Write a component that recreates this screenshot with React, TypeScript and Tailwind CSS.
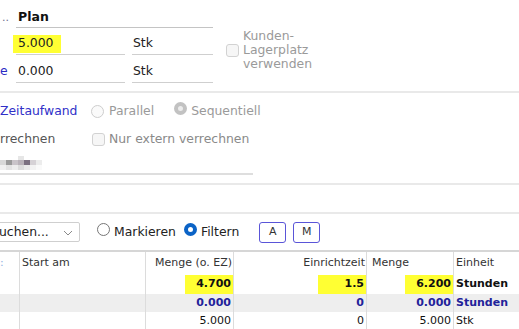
import React from "react";

function Radio({ checked = false, disabled = false }: { checked?: boolean; disabled?: boolean }) {
  if (checked && disabled) {
    return <span className="inline-block h-[13px] w-[13px] shrink-0 rounded-full border-[4px] border-[#c2c2c2] bg-[#ececec]" />;
  }
  if (checked) {
    return <span className="inline-block h-[13px] w-[13px] shrink-0 rounded-full border-[4px] border-[#0b63c6] bg-white" />;
  }
  return (
    <span
      className={`inline-block h-[13px] w-[13px] shrink-0 rounded-full border ${
        disabled ? "border-[#cdcdcd] bg-[#fafafa]" : "border-[#767676] bg-white"
      }`}
    />
  );
}

function Checkbox() {
  return <span className="inline-block h-[13px] w-[13px] shrink-0 rounded-[3px] border border-[#d2d2d2] bg-[#f6f6f6]" />;
}

const blur = [
  ["#d8d8d8", "#9a9a9a", "#c9c4c9", "#b9b2b9", "#7b7080", "#d6d2d6", "#ececec"],
  ["#f0f0f0", "#e3e3e3", "#ededed", "#dcdcdc", "#e9e9e9", "#f3f3f3", "#fafafa"],
];

const rows = [
  { a: "4.700", b: "1.5", c: "6.200", u: "Stunden", kind: "hl" },
  { a: "0.000", b: "0", c: "0.000", u: "Stunden", kind: "blue" },
  { a: "5.000", b: "0", c: "5.000", u: "Stk", kind: "plain" },
];

export default function App() {
  return (
    <div className="relative h-[329px] w-[519px] overflow-hidden bg-white font-['DejaVu_Sans',Verdana,sans-serif] text-[12.4px] text-[#222]">
      {/* Plan block */}
      <div className="flex h-[93px] border-b-2 border-[#e9e9e9] pt-[7px]">
        <div className="flex flex-col">
          <div className="flex h-[21px] items-center">
            <span className="w-[16px] pl-[2px] text-[11px] leading-none text-[#6f6f8f]">..</span>
            <div className="flex h-full w-[197px] items-center border-b border-[#c4c4c4] pl-[2px] text-[12.5px] font-bold text-[#111]">
              Plan
            </div>
          </div>
          <div className="mt-[5px] flex h-[22px] items-stretch">
            <span className="w-[16px]" />
            <div className="flex w-[109px] items-center border-b border-[#cfcfcf]">
              <span className="-ml-[3px] flex h-[18px] w-[48px] items-center bg-[#ffff33] pl-[5px]">5.000</span>
            </div>
            <div className="ml-[7px] flex w-[81px] items-center border-b border-[#cfcfcf] pl-[1px]">Stk</div>
          </div>
          <div className="mt-[6px] flex h-[22px] items-stretch">
            <span className="flex w-[16px] items-start pt-[1px] text-[#2b2bc4]">e</span>
            <div className="flex w-[109px] items-center border-b border-[#cfcfcf] pl-[2px]">0.000</div>
            <div className="ml-[7px] flex w-[81px] items-center border-b border-[#cfcfcf] pl-[1px]">Stk</div>
          </div>
        </div>
        <div className="ml-[13px] mt-[21px] flex h-[44px] items-center gap-[4px]">
          <Checkbox />
          <div className="leading-[14px] text-[#9a9a9a]">
            Kunden-
            <br />
            Lagerplatz
            <br />
            verwenden
          </div>
        </div>
      </div>

      {/* Zeitaufwand block */}
      <div className="h-[92px] border-b-2 border-[#e9e9e9] pt-[7px]">
        <div className="flex h-[22px] items-center">
          <span className="w-[91px] text-[#3030c8]">Zeitaufwand</span>
          <Radio disabled />
          <span className="ml-[5px] text-[#9a9a9a]">Parallel</span>
          <span className="ml-[20px]">
            <Radio checked disabled />
          </span>
          <span className="ml-[4px] text-[#9a9a9a]">Sequentiell</span>
        </div>
        <div className="mt-[6px] flex h-[22px] items-center">
          <span className="w-[92px] text-[#555]">rrechnen</span>
          <Checkbox />
          <span className="ml-[4px] text-[#8a8a8a]">Nur extern verrechnen</span>
        </div>
        <div className="mt-[6px] w-[253px] border-b-2 border-[#dedede] pb-[3px]">
          <div className="flex flex-col">
            <div className="ml-[18px] h-[4px] w-[6px] bg-[#e6e6e6]" />
            {blur.map((r, i) => (
              <div key={i} className="flex">
                {r.map((c, j) => (
                  <span key={j} className="h-[5px] w-[6px]" style={{ backgroundColor: c }} />
                ))}
              </div>
            ))}
          </div>
        </div>
      </div>

      {/* empty band */}
      <div className="h-[29px] border-b-2 border-[#e9e9e9]" />

      {/* toolbar */}
      <div className="flex h-[36px] items-center">
        <div className="-ml-[12px] flex h-[20px] w-[92px] items-center justify-between rounded-[2px] border border-[#cfcfcf] bg-white pl-[10px] pr-[6px]">
          <span>uchen...</span>
          <svg width="10" height="6" viewBox="0 0 10 6" className="mt-[1px]">
            <path d="M1 1 L5 5 L9 1" fill="none" stroke="#8a8a8a" strokeWidth="1" />
          </svg>
        </div>
        <span className="ml-[17px]">
          <Radio />
        </span>
        <span className="ml-[4px] text-[#222]">Markieren</span>
        <span className="ml-[8px]">
          <Radio checked />
        </span>
        <span className="ml-[4px] text-[#222]">Filtern</span>
        <div className="ml-[20px] flex gap-[7px]">
          {["A", "M"].map((l) => (
            <span
              key={l}
              className="flex h-[21px] w-[27px] shrink-0 items-center justify-center rounded-[3px] border-[1.5px] border-[#5a55d8] bg-white text-[11px] text-[#333]"
            >
              {l}
            </span>
          ))}
        </div>
      </div>

      {/* table */}
      <div className="border-t-2 border-[#d6d6d6] text-[11px]">
        <div className="flex h-[23px] items-center">
          <span className="flex h-full w-[20px] items-center border-r border-[#dcdcdc] text-[#8fb0e0]">:</span>
          <span className="flex h-full w-[126px] items-center border-r border-[#dcdcdc] pl-[2px] text-[#333]">Start am</span>
          <span className="flex h-full w-[88px] items-center justify-end border-r border-[#dcdcdc] pr-[1px] text-[#333]">
            Menge (o. EZ)
          </span>
          <span className="flex h-full w-[133px] items-center justify-end border-r border-[#dcdcdc] pr-[1px] text-[#333]">
            Einrichtzeit
          </span>
          <span className="flex h-full w-[87px] items-center border-r border-[#dcdcdc] pl-[5px] text-[#333]">Menge</span>
          <span className="flex h-full flex-1 items-center pl-[2px] text-[#333]">Einheit</span>
        </div>
        {rows.map((r, i) => {
          const bold = r.kind !== "plain";
          const color = r.kind === "blue" ? "text-[#22229a]" : "text-[#111]";
          const bg = r.kind === "blue" ? "bg-[#eeeeee]" : "bg-white";
          const h = i === 0 ? "h-[19px]" : "h-[18px]";
          const val = (v: string) =>
            r.kind === "hl" ? (
              <span className="flex h-full w-[48px] items-center justify-end bg-[#ffff33] pr-[2px]">{v}</span>
            ) : (
              <span className="pr-[2px]">{v}</span>
            );
          return (
            <div key={i} className={`flex ${h} items-stretch ${bg} ${color} ${bold ? "font-bold" : ""}`}>
              <span className="w-[20px] border-r border-[#dcdcdc]" />
              <span className="w-[126px] border-r border-[#dcdcdc]" />
              <span className="flex w-[88px] items-center justify-end border-r border-[#dcdcdc]">{val(r.a)}</span>
              <span className="flex w-[133px] items-center justify-end border-r border-[#dcdcdc]">{val(r.b)}</span>
              <span className="flex w-[87px] items-center justify-end border-r border-[#dcdcdc]">{val(r.c)}</span>
              <span className="flex flex-1 items-center pl-[2px]">{r.u}</span>
            </div>
          );
        })}
        <div className="flex h-[20px]">
          <span className="w-[20px] border-r border-[#dcdcdc]" />
          <span className="w-[126px] border-r border-[#dcdcdc]" />
          <span className="w-[88px] border-r border-[#dcdcdc]" />
          <span className="w-[133px] border-r border-[#dcdcdc]" />
          <span className="w-[87px] border-r border-[#dcdcdc]" />
        </div>
      </div>
    </div>
  );
}
